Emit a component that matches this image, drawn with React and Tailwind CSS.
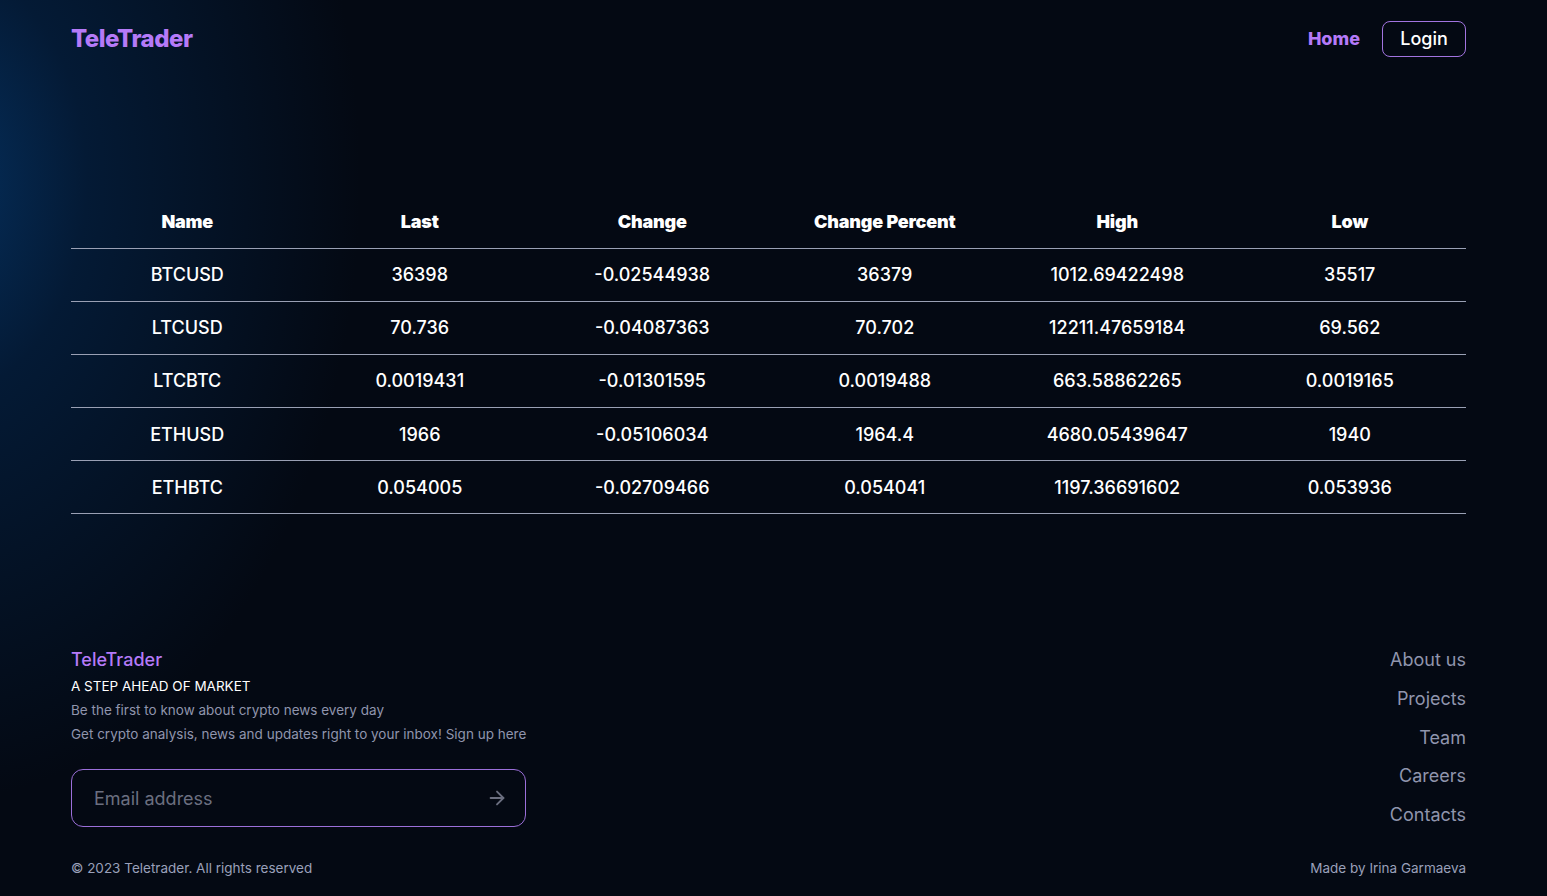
const rows = [
  ["BTCUSD", "36398", "-0.02544938", "36379", "1012.69422498", "35517"],
  ["LTCUSD", "70.736", "-0.04087363", "70.702", "12211.47659184", "69.562"],
  ["LTCBTC", "0.0019431", "-0.01301595", "0.0019488", "663.58862265", "0.0019165"],
  ["ETHUSD", "1966", "-0.05106034", "1964.4", "4680.05439647", "1940"],
  ["ETHBTC", "0.054005", "-0.02709466", "0.054041", "1197.36691602", "0.053936"],
];

const heads = ["Name", "Last", "Change", "Change Percent", "High", "Low"];
const links = ["About us", "Projects", "Team", "Careers", "Contacts"];

export default function App() {
  return (
    <div
      className="min-h-[896px] w-full bg-[#040913] bg-[radial-gradient(ellipse_420px_620px_at_-60px_180px,#05305e_0%,#041a35_35%,#040913_100%)] text-white flex flex-col pl-[71px] pr-[81px]"
      style={{ fontFamily: "Inter, 'Noto Sans', sans-serif" }}
    >
      <header className="flex items-center justify-between h-[77px]">
        <span className="text-[24px] font-extrabold tracking-[-0.5px] text-[#b57af8]">TeleTrader</span>
        <nav className="flex items-center gap-[22px]">
          <a className="text-[18px] font-extrabold text-[#b57af8]">Home</a>
          <button className="h-[36px] w-[84px] rounded-lg border border-[#a274e0] text-[18px] font-medium">Login</button>
        </nav>
      </header>

      <table className="w-full mt-[121px] table-fixed border-collapse">
        <thead>
          <tr className="border-b border-[#9aa0b4]">
            {heads.map((h) => (
              <th key={h} className="h-[50px] pb-[2px] text-[18px] font-black tracking-[-0.2px] text-center">{h}</th>
            ))}
          </tr>
        </thead>
        <tbody>
          {rows.map((r) => (
            <tr key={r[0]} className="border-b border-[#9aa0b4]">
              {r.map((c, i) => (
                <td key={i} className="h-[53.2px] text-center text-[18px] font-medium">{c}</td>
              ))}
            </tr>
          ))}
        </tbody>
      </table>

      <footer className="mt-[135px] flex justify-between">
        <div className="flex flex-col">
          <span className="text-[18px] font-medium leading-[22px] text-[#b57af8]">TeleTrader</span>
          <span className="mt-[5px] text-[13.5px] leading-[20px]">A STEP AHEAD OF MARKET</span>
          <span className="mt-[4px] text-[13.5px] leading-[20px] text-[#9095ad]">Be the first to know about crypto news every day</span>
          <span className="mt-[4px] text-[13.5px] leading-[20px] text-[#9095ad]">Get crypto analysis, news and updates right to your inbox! Sign up here</span>
          <div className="mt-[25px] w-[455px] h-[58px] rounded-[12px] border border-[#9b6fd9] flex items-center pl-[22px] pr-[17px]">
            <input
              placeholder="Email address"
              className="flex-1 bg-transparent outline-none text-[18px] placeholder:text-[#6b6f80]"
            />
            <svg width="22" height="22" viewBox="0 0 24 24" fill="none" stroke="#6b6f80" strokeWidth="2" strokeLinecap="round" strokeLinejoin="round">
              <path d="M5 12h14" />
              <path d="m12 5 7 7-7 7" />
            </svg>
          </div>
          <span className="mt-[31px] text-[13.5px] leading-[20px] text-[#9aa0ba]">© 2023 Teletrader. All rights reserved</span>
        </div>
        <div className="flex flex-col items-end">
          {links.map((l, i) => (
            <a key={l} className={`text-[18px] leading-[22px] text-[#9095ad] ${i > 0 ? "mt-[16.6px]" : ""}`}>{l}</a>
          ))}
          <span className="mt-auto text-[13.5px] leading-[20px] text-[#9aa0ba]">Made by Irina Garmaeva</span>
        </div>
      </footer>
    </div>
  );
}
